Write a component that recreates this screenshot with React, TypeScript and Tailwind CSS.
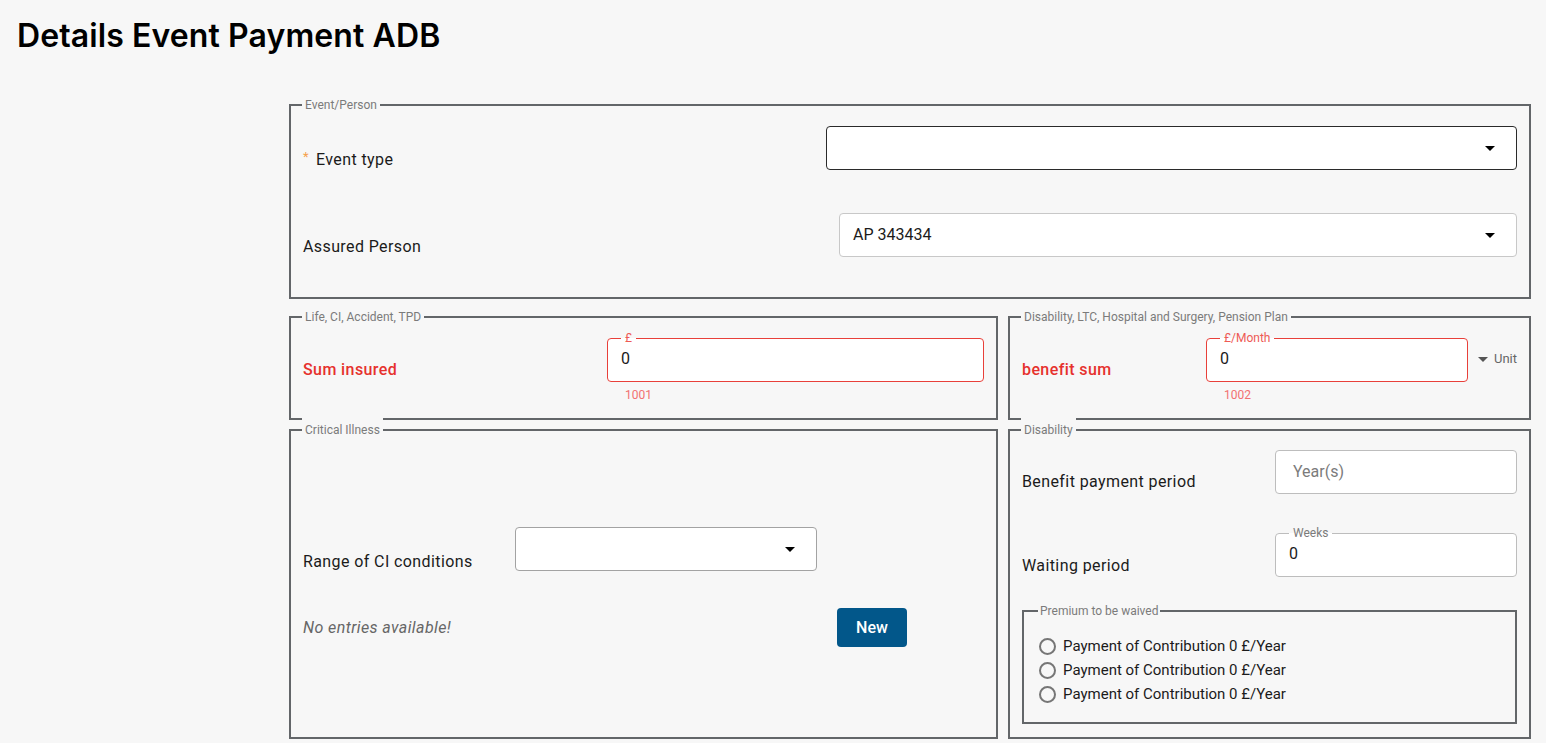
import React from 'react';

type Tone = 'red' | 'gray';

function Caret({ className = '' }: { className?: string }) {
  return (
    <svg width="10" height="5" viewBox="0 0 10 5" className={className}>
      <path d="M0 0h10L5 5z" fill="currentColor" />
    </svg>
  );
}

function Group({ title, className = '', children }: { title: string; className?: string; children: React.ReactNode }) {
  return (
    <fieldset className={`min-w-0 border-2 border-[#636669] px-[12px] ${className}`}>
      <legend className="-ml-[1px] bg-[#f7f7f7] px-[3px] text-[12px] leading-[24px] text-[#7b7b7b]">{title}</legend>
      {children}
    </fieldset>
  );
}

function Select({ value = '', border, className = '' }: { value?: string; border: string; className?: string }) {
  return (
    <div className={`flex h-[44px] items-center justify-between rounded-[4px] border bg-white pl-[13px] pr-[21px] text-[16px] text-[#1b1b1b] ${border} ${className}`}>
      <span>{value}</span>
      <Caret className="text-black" />
    </div>
  );
}

// outlined field with a notched floating label
function Outlined({ label, value, tone }: { label: string; value: string; tone: Tone }) {
  const red = tone === 'red';
  return (
    <fieldset
      className={`h-[52px] min-w-0 rounded-[4px] border bg-white px-[13px] ${red ? 'border-[#e8403a]' : 'border-[#bdbdbd]'}`}
    >
      <legend className={`px-[4px] text-[12px] leading-[16px] ${red ? 'text-[#ee5a55]' : 'text-[#7b7b7b]'}`}>{label}</legend>
      <div className="pt-[1px] text-[16px] leading-[24px] text-[#1b1b1b]">{value}</div>
    </fieldset>
  );
}

function Label({ children, className = '' }: { children: React.ReactNode; className?: string }) {
  return <div className={`text-[16px] leading-[24px] tracking-[0.4px] text-[#1b1b1b] ${className}`}>{children}</div>;
}

function Radio({ text }: { text: string }) {
  return (
    <div className="flex h-[24px] items-center gap-[7px]">
      <span className="h-[17px] w-[17px] rounded-full border-2 border-[#767676]" />
      <span className="text-[15px] text-[#1b1b1b]">{text}</span>
    </div>
  );
}

export default function App() {
  return (
    <div className="min-h-screen bg-[#f7f7f7] pl-[17px] pr-[15px] font-['Roboto','Liberation_Sans',sans-serif]">
      <h1 className="pt-[16px] font-['Inter',sans-serif] text-[32px] font-semibold leading-[40px] tracking-[0.1px] text-black">
        Details Event Payment ADB
      </h1>

      <div className="ml-[272px] mt-[37px] flex flex-col">
        <Group title="Event/Person">
          <div className="flex flex-col gap-[43px] pb-[40px] pt-[9px]">
            <div className="flex items-end">
              <Label className="-mb-[3px] flex-1">
                <span className="relative -top-[4px] mr-[7px] text-[13px] text-[#f5a04a]">*</span>
                Event type
              </Label>
              <Select border="border-[#2a2a2a]" className="w-[691px]" />
            </div>
            <div className="flex items-end">
              <Label className="-mb-[2px] flex-1">Assured Person</Label>
              <Select value="AP 343434" border="border-[#c8c8c8]" className="w-[678px]" />
            </div>
          </div>
        </Group>

        <div className="mt-[6px] grid grid-cols-[709px_1fr] gap-x-[10px]">
          <Group title="Life, CI, Accident, TPD">
            <div className="grid grid-cols-[1fr_377px] pb-[15px] pt-[1px]">
              <Label className="self-end font-medium text-[#e6312d]">Sum insured</Label>
              <Outlined label="£" value="0" tone="red" />
              <div />
              <div className="mt-[5px] pl-[18px] text-[12px] leading-[16px] text-[#f27171]">1001</div>
            </div>
          </Group>
          <Group title="Disability, LTC, Hospital and Surgery, Pension Plan">
            <div className="grid grid-cols-[1fr_262px_49px] pb-[15px] pt-[1px]">
              <Label className="self-end font-medium text-[#e6312d]">benefit sum</Label>
              <Outlined label="£/Month" value="0" tone="red" />
              <div className="flex items-center justify-end gap-[6px] pt-[6px] text-[13px] text-[#666]">
                <Caret className="text-[#555]" />
                <span>Unit</span>
              </div>
              <div />
              <div className="mt-[5px] pl-[18px] text-[12px] leading-[16px] text-[#f27171]">1002</div>
            </div>
          </Group>
        </div>

        <div className="-mt-[2px] grid grid-cols-[709px_1fr] gap-x-[10px]">
          <Group title="Critical Illness">
            <div className="flex items-end pt-[85px]">
              <Label className="-mb-[3px] w-[212px]">Range of CI conditions</Label>
              <Select border="border-[#a3a3a3]" className="w-[302px]" />
            </div>
            <div className="mt-[37px] flex items-center">
              <div className="w-[534px] text-[16px] italic tracking-[0.4px] text-[#666]">No entries available!</div>
              <button className="h-[39px] w-[70px] rounded-[4px] bg-[#02578a] text-[16px] font-medium text-white">New</button>
            </div>
          </Group>

          <Group title="Disability">
            <div className="flex flex-col pb-[13px] pt-[8px]">
              <div className="flex items-end">
                <Label className="flex-1">Benefit payment period</Label>
                <div className="flex h-[44px] w-[242px] items-center rounded-[4px] border border-[#bdbdbd] bg-white pl-[17px] text-[16px] text-[#7b7b7b]">
                  Year(s)
                </div>
              </div>
              <div className="mt-[31px] flex items-end">
                <Label className="-mb-[1px] flex-1">Waiting period</Label>
                <div className="w-[242px]">
                  <Outlined label="Weeks" value="0" tone="gray" />
                </div>
              </div>
              <fieldset className="mt-[22px] min-w-0 border-2 border-[#636669] pl-[14px]">
                <legend className="bg-[#f7f7f7] px-[2px] text-[12px] leading-[24px] text-[#7b7b7b]">Premium to be waived</legend>
                <div className="flex flex-col pb-[16px] pl-[1px] pt-[11px]">
                  <Radio text="Payment of Contribution 0 £/Year" />
                  <Radio text="Payment of Contribution 0 £/Year" />
                  <Radio text="Payment of Contribution 0 £/Year" />
                </div>
              </fieldset>
            </div>
          </Group>
        </div>
      </div>
    </div>
  );
}
